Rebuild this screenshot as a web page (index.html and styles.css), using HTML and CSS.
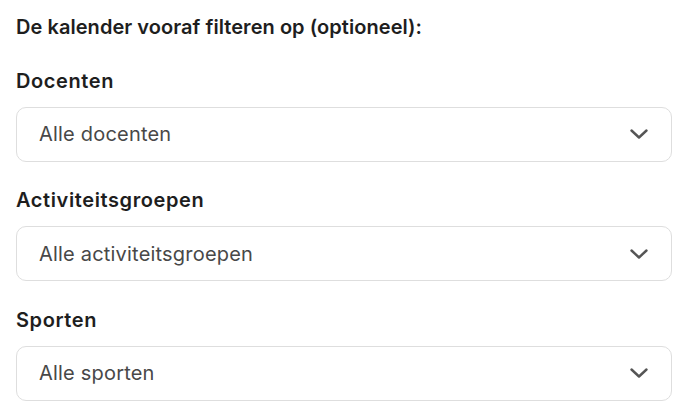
FILE: index.html
```html
<!DOCTYPE html>
<html lang="nl">
<head>
<meta charset="utf-8">
<link rel="stylesheet" href="styles.css">
</head>
<body>
<div class="page">
  <h2 class="title">De kalender vooraf filteren op (optioneel):</h2>
  <div class="field">
    <div class="label">Docenten</div>
    <div class="select"><span>Alle docenten</span>
      <svg class="chev" width="18" height="10" viewBox="0 0 18 10"><path d="M1.5 1.5 L9 8.5 L16.5 1.5" fill="none" stroke="#555" stroke-width="2.4" stroke-linecap="round" stroke-linejoin="round"/></svg>
    </div>
  </div>
  <div class="field">
    <div class="label">Activiteitsgroepen</div>
    <div class="select"><span>Alle activiteitsgroepen</span>
      <svg class="chev" width="18" height="10" viewBox="0 0 18 10"><path d="M1.5 1.5 L9 8.5 L16.5 1.5" fill="none" stroke="#555" stroke-width="2.4" stroke-linecap="round" stroke-linejoin="round"/></svg>
    </div>
  </div>
  <div class="field">
    <div class="label">Sporten</div>
    <div class="select"><span>Alle sporten</span>
      <svg class="chev" width="18" height="10" viewBox="0 0 18 10"><path d="M1.5 1.5 L9 8.5 L16.5 1.5" fill="none" stroke="#555" stroke-width="2.4" stroke-linecap="round" stroke-linejoin="round"/></svg>
    </div>
  </div>
</div>
</body>
</html>
```
FILE: styles.css
```css
html, body { margin: 0; padding: 0; background: #fff; }
body { font-family: Inter, "Noto Sans", sans-serif; color: #222; }
.page { padding: 13px 16px; display: flex; flex-direction: column; gap: 24.5px; }
.title { margin: 0 0 1px; font-size: 20px; line-height: 28px; font-weight: 600; color: #1e1e1e; letter-spacing: 0.05px; }
.field { display: flex; flex-direction: column; gap: 12px; }
.label { font-size: 20px; line-height: 28px; font-weight: 600; color: #1e1e1e; letter-spacing: 0.6px; }
.select { box-sizing: border-box; height: 55px; border: 1px solid #dedede; border-radius: 10px; display: flex; align-items: center; justify-content: space-between; padding: 0 23px 0 22px; font-size: 20px; color: #484848; letter-spacing: 0.2px; }
.chev { display: block; }
```
